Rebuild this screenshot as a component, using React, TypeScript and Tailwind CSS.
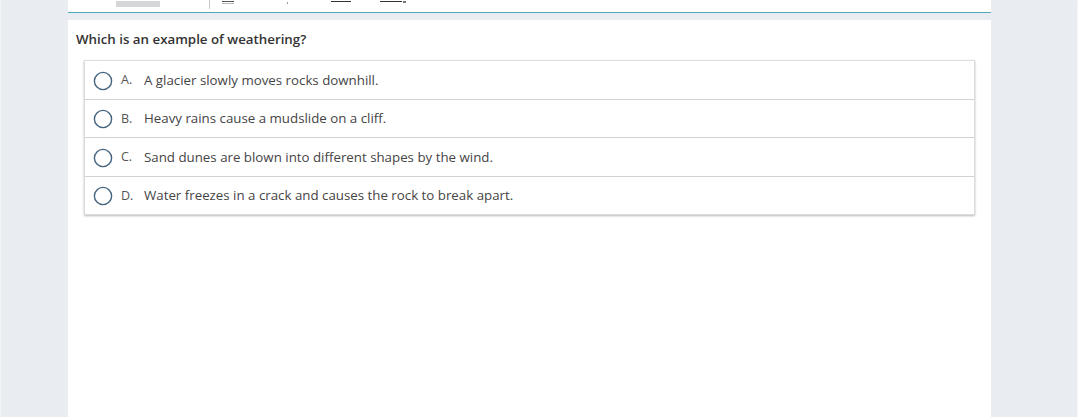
const options = [
  { letter: "A.", text: "A glacier slowly moves rocks downhill.", h: "h-[38px]" },
  { letter: "B.", text: "Heavy rains cause a mudslide on a cliff.", h: "h-[38px]" },
  { letter: "C.", text: "Sand dunes are blown into different shapes by the wind.", h: "h-[39px]" },
  { letter: "D.", text: "Water freezes in a crack and causes the rock to break apart.", h: "h-[38px]" },
];

function Radio() {
  return (
    <svg width="20" height="20" viewBox="0 0 20 20" aria-hidden="true" className="shrink-0">
      <circle cx="10" cy="10" r="8.6" fill="#fff" stroke="#45647f" strokeWidth="1.4" />
    </svg>
  );
}

function Toolbar() {
  return (
    <div className="relative h-[13px] border-b border-[#4fa9b8] bg-white">
      {/* cut-off toolbar remnants */}
      <div className="absolute left-[48px] top-[1px] h-[6px] w-[44px] bg-[#d4d6d8]" />
      <div className="absolute left-[141px] top-0 h-[9px] w-px bg-[#c9c9c9]" />
      <div className="absolute left-[154px] top-[1px] h-px w-[12px] bg-[#555]" />
      <div className="absolute left-[154px] top-[3px] h-px w-[12px] bg-[#bbb]" />
      <div className="absolute left-[219px] top-[2px] h-[2px] w-px bg-[#999]" />
      <div className="absolute left-[263px] top-[1px] h-px w-[20px] bg-[#333]" />
      <div className="absolute left-[312px] top-[1px] h-px w-[22px] bg-[#333]" />
      <div className="absolute left-[335px] top-[1px] h-[2px] w-[3px] bg-[#777]" />
    </div>
  );
}

export default function App() {
  return (
    <div className="flex h-[417px] w-full overflow-hidden bg-[#e9ecf1] font-['Open_Sans',sans-serif]">
      <div className="w-[68px] shrink-0 border-l border-[#f3f4f6]" />
      <div className="flex w-[923px] shrink-0 flex-col">
        <Toolbar />
        <div className="h-[7px]" />
        <div className="flex-1 bg-white px-2">
          <p className="pt-[10px] text-[13.3px] font-semibold leading-[18px] text-[#333]">
            Which is an example of weathering?
          </p>
          <div className="ml-2 mr-2 mt-[12px] border border-[#dcdcdc] bg-white shadow-[0_1px_2px_rgba(0,0,0,0.28)]">
            {options.map((o, i) => (
              <div
                key={o.letter}
                className={`flex ${o.h} items-center pl-[8px] pt-px ${i > 0 ? "border-t border-[#d2d2d2]" : ""}`}
              >
                <Radio />
                <span className="ml-[8px] w-[23px] text-[12.5px] text-[#555]">{o.letter}</span>
                <span className="text-[13.3px] text-[#454545]">{o.text}</span>
              </div>
            ))}
          </div>
        </div>
      </div>
      <div className="mt-px flex-1 border-r border-[#f5f6f8]" />
    </div>
  );
}
